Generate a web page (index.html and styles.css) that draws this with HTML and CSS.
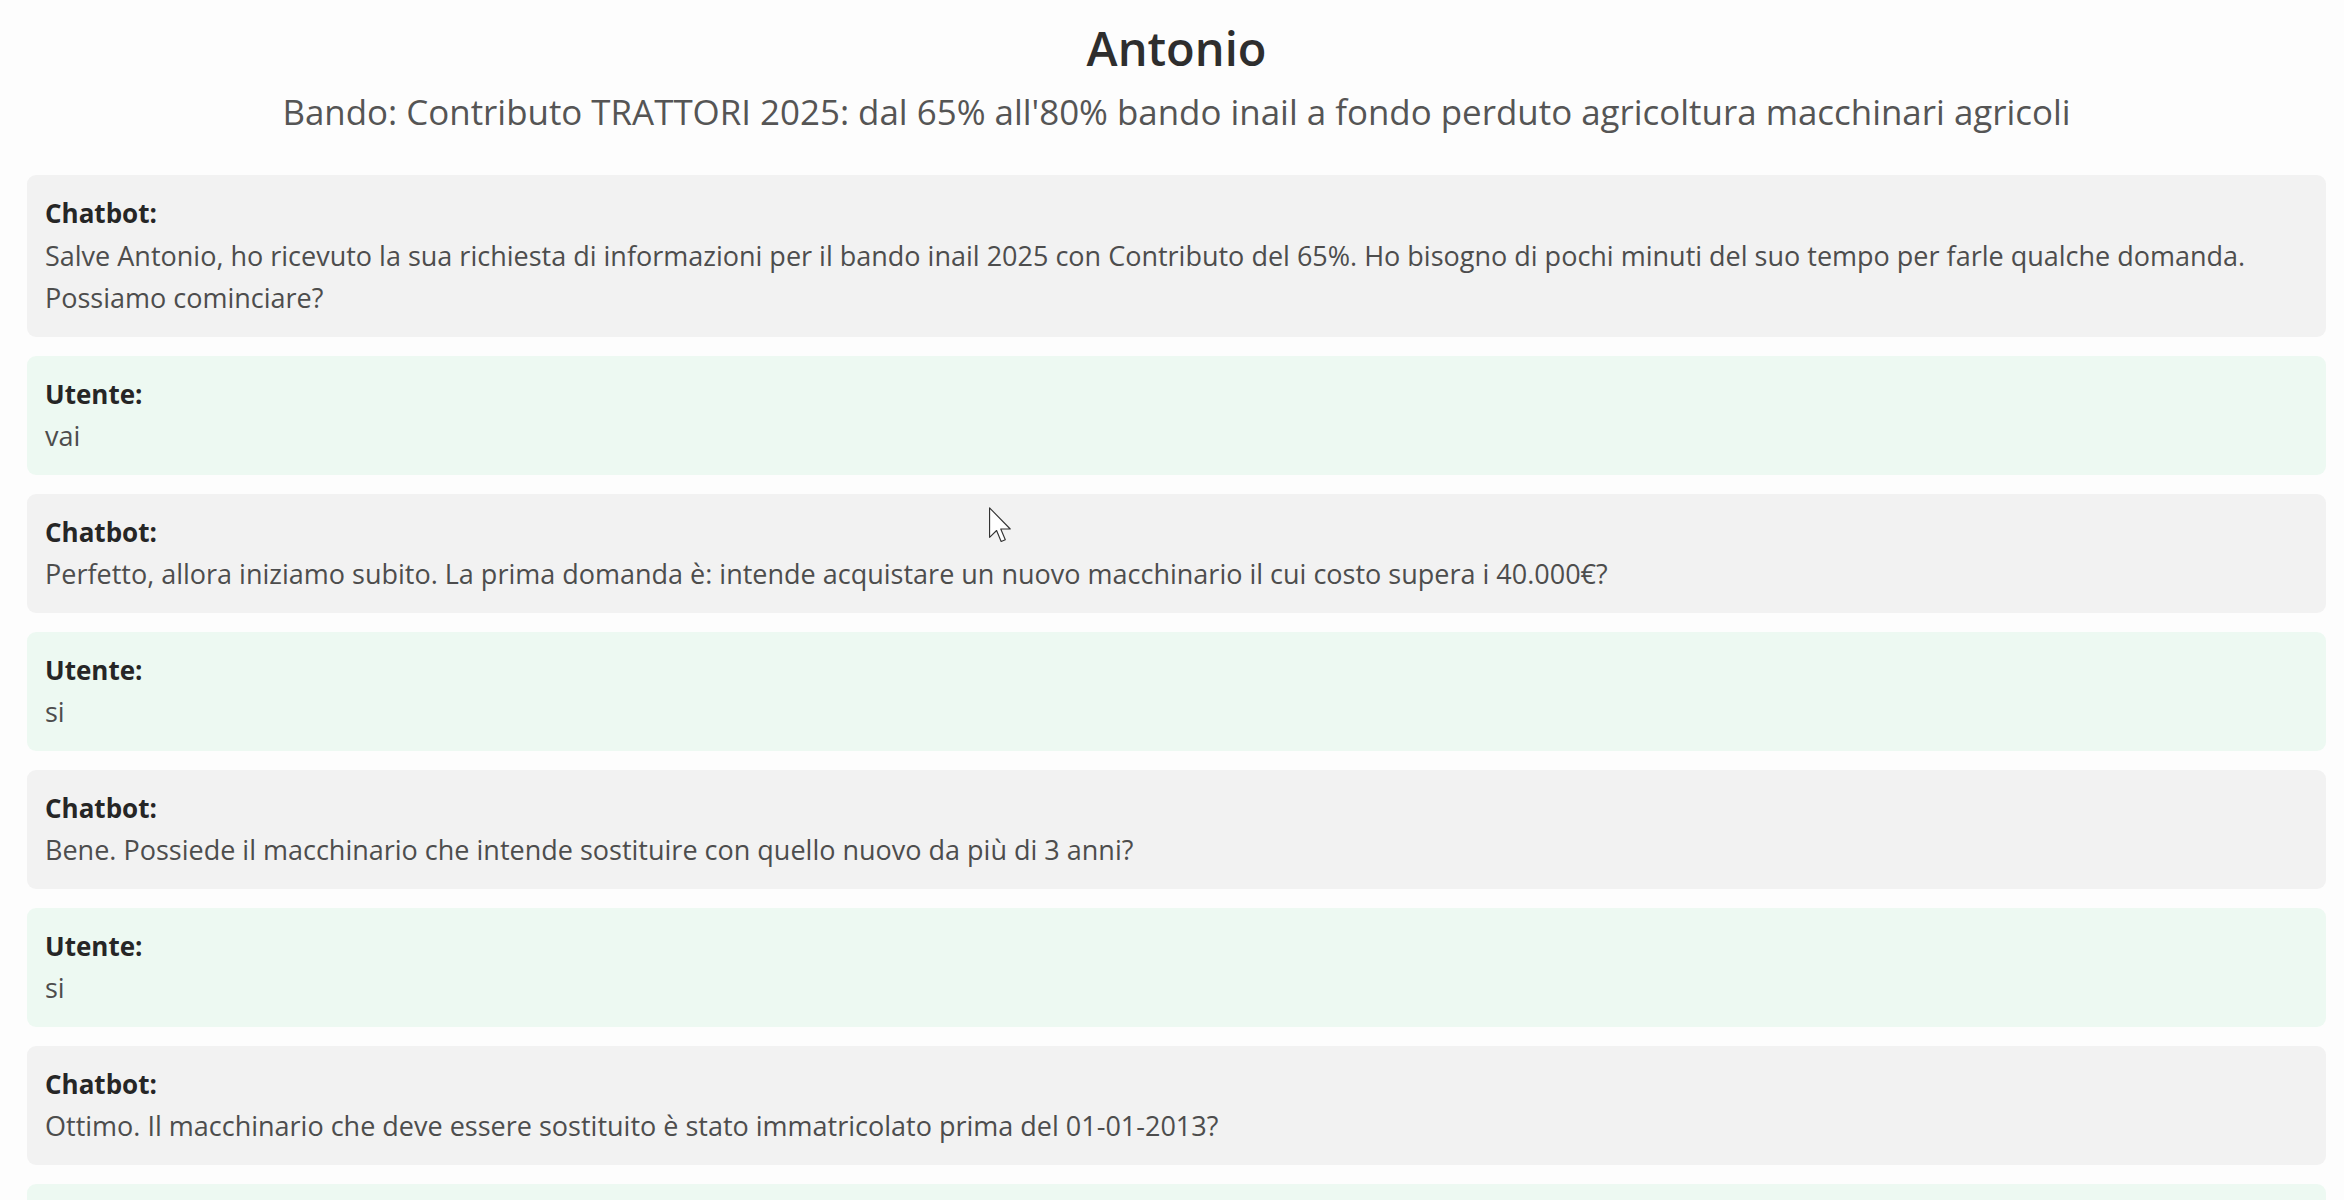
FILE: index.html
```html
<!DOCTYPE html>
<html lang="it">
<head>
<meta charset="utf-8">
<title>Antonio</title>
<link rel="stylesheet" href="styles.css">
</head>
<body>
<div class="page">
  <header class="head">
    <h1 class="title">Antonio</h1>
    <h2 class="subtitle">Bando: Contributo TRATTORI 2025: dal 65% all'80% bando inail a fondo perduto agricoltura macchinari agricoli</h2>
  </header>
  <main class="chat">
    <div class="msg bot">
      <div class="who">Chatbot:</div>
      <div class="text">Salve Antonio, ho ricevuto la sua richiesta di informazioni per il bando inail 2025 con Contributo del 65%. Ho bisogno di pochi minuti del suo tempo per farle qualche domanda. Possiamo cominciare?</div>
    </div>
    <div class="msg user">
      <div class="who">Utente:</div>
      <div class="text">vai</div>
    </div>
    <div class="msg bot">
      <div class="who">Chatbot:</div>
      <div class="text">Perfetto, allora iniziamo subito. La prima domanda è: intende acquistare un nuovo macchinario il cui costo supera i 40.000€?</div>
    </div>
    <div class="msg user">
      <div class="who">Utente:</div>
      <div class="text">si</div>
    </div>
    <div class="msg bot">
      <div class="who">Chatbot:</div>
      <div class="text">Bene. Possiede il macchinario che intende sostituire con quello nuovo da più di 3 anni?</div>
    </div>
    <div class="msg user">
      <div class="who">Utente:</div>
      <div class="text">si</div>
    </div>
    <div class="msg bot">
      <div class="who">Chatbot:</div>
      <div class="text">Ottimo. Il macchinario che deve essere sostituito è stato immatricolato prima del 01-01-2013?</div>
    </div>
    <div class="msg user">
      <div class="who">Utente:</div>
      <div class="text">si</div>
    </div>
  </main>
  <svg class="cursor" width="24" height="36" viewBox="0 0 12 19" aria-hidden="true">
    <path d="M0.5 0.5 L0.5 16 L4.2 12.4 L6.6 18.2 L8.8 17.3 L6.4 11.6 L11.4 11.6 Z" fill="#fff" stroke="#333" stroke-width="0.6" stroke-linejoin="round"/>
  </svg>
</div>
</body>
</html>
```

FILE: styles.css
```css
html, body {
  margin: 0;
  padding: 0;
  background: #fdfdfd;
}

body {
  font-family: "Open Sans", "Noto Sans", sans-serif;
  color: #444;
}

.page {
  position: relative;
  padding: 20px 18px 0 27px;
}

.head {
  text-align: center;
}

.title {
  margin: 0;
  font-size: 47px;
  line-height: 56px;
  font-weight: 600;
  color: #2e2e2e;
}

.subtitle {
  margin: 14px 0 0;
  font-size: 34.9px;
  line-height: 44px;
  font-weight: 400;
  color: #555;
}

.chat {
  margin-top: 41px;
  display: flex;
  flex-direction: column;
  gap: 19px;
}

.msg {
  border-radius: 9px;
  padding: 17px 18px;
  font-size: 27px;
  line-height: 42.5px;
}

.msg.bot {
  background: #f2f2f2;
}

.msg.user {
  background: #edf9f2;
}

.who {
  font-weight: 700;
  font-size: 26px;
  color: #262626;
}

.text {
  color: #4d4d4d;
}

.cursor {
  position: absolute;
  left: 988px;
  top: 507px;
}
```
